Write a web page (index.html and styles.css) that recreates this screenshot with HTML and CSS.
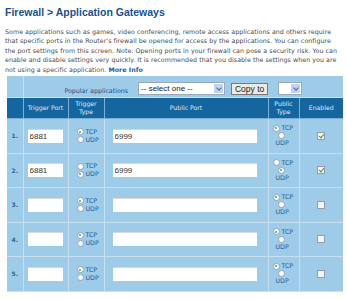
FILE: index.html
```html
<!DOCTYPE html>
<html lang="en">
<head>
  <meta charset="UTF-8">
  <title>Application Gateways</title>
  <link rel="stylesheet" href="styles.css">
</head>
<body>
  <h1>Firewall &gt; Application Gateways</h1>
  <p class="intro">
    Some applications such as games, video conferencing, remote access applications and others require<br>
    that specific ports in the Router's firewall be opened for access by the applications. You can configure<br>
    the port settings from this screen. Note: Opening ports in your firewall can pose a security risk. You can<br>
    enable and disable settings very quickly. It is recommended that you disable the settings when you are<br>
    not using a specific application. <a href="#">More Info</a>
  </p>

  <table class="gateways">
    <colgroup>
      <col class="c-num">
      <col class="c-tport">
      <col class="c-ttype">
      <col class="c-pport">
      <col class="c-ptype">
      <col class="c-en">
    </colgroup>
    <tr class="popular">
      <td></td>
      <td colspan="5">
        <div class="popular-bar">
          <span class="label">Popular applications</span>
          <span class="select wide">-- select one --<i class="arrow"></i></span>
          <span class="btn">Copy to</span>
          <span class="select small"><i class="arrow"></i></span>
        </div>
      </td>
    </tr>
    <tr class="head">
      <th></th>
      <th>Trigger Port</th>
      <th>Trigger<br>Type</th>
      <th>Public Port</th>
      <th>Public<br>Type</th>
      <th>Enabled</th>
    </tr>
    <tbody id="rows"></tbody>
  </table>

  <script>
    const rows = [
      { trig: "6881", ttype: "tcp", pub: "6999", ptype: "tcp", on: true },
      { trig: "6881", ttype: "udp", pub: "6999", ptype: "udp", on: true },
      { trig: "", ttype: "tcp", pub: "", ptype: "tcp", on: false },
      { trig: "", ttype: "tcp", pub: "", ptype: "tcp", on: false },
      { trig: "", ttype: "tcp", pub: "", ptype: "tcp", on: false }
    ];

    const body = document.getElementById('rows');
    rows.forEach((r, i) => {
      const n = i + 1;
      const tr = document.createElement('tr');
      tr.className = 'data';
      tr.innerHTML = `
        <td class="num">${n}.</td>
        <td><input class="port" type="text" value="${r.trig}"></td>
        <td class="type">
          <label><input type="radio" name="tt${n}" ${r.ttype === 'tcp' ? 'checked' : ''}> TCP</label>
          <label><input type="radio" name="tt${n}" ${r.ttype === 'udp' ? 'checked' : ''}> UDP</label>
        </td>
        <td><input class="port long" type="text" value="${r.pub}"></td>
        <td class="type ptype">
          <label><input type="radio" name="pt${n}" ${r.ptype === 'tcp' ? 'checked' : ''}> TCP</label>
          <label class="stack"><input type="radio" name="pt${n}" ${r.ptype === 'udp' ? 'checked' : ''}><span>UDP</span></label>
        </td>
        <td class="en"><input type="checkbox" ${r.on ? 'checked' : ''}></td>`;
      body.appendChild(tr);
    });
  </script>
</body>
</html>
```

FILE: styles.css
```css
body {
  margin: 0;
  padding: 5px 4px 0 5px;
  font-family: "DejaVu Sans", Verdana, sans-serif;
  background: #fff;
}

h1 {
  margin: 0;
  font-family: "Liberation Sans", Arial, sans-serif;
  font-size: 10.5px;
  font-weight: bold;
  color: #1c4f8c;
  line-height: 14px;
}

.intro {
  margin: 8px 0 0 0;
  font-size: 6.3px;
  line-height: 9.4px;
  color: #4a4a4a;
  letter-spacing: 0.05px;
  white-space: nowrap;
}

.intro a {
  color: #1d5da6;
  font-weight: bold;
  text-decoration: none;
}

.gateways {
  margin: 2px 0 0 2px;
  width: 336px;
  border-collapse: collapse;
  table-layout: fixed;
  background: #9ecbe7;
  font-size: 6.3px;
  color: #1f5c99;
}

.c-num { width: 16px; }
.c-tport { width: 45px; }
.c-ttype { width: 36px; }
.c-pport { width: 164px; }
.c-ptype { width: 31px; }
.c-en { width: 44px; }

.gateways td,
.gateways th {
  border: 1px solid #c6e0f1;
  padding: 0;
}

.gateways tr:first-child td {
  border-top: none;
}

.gateways td:first-child,
.gateways th:first-child {
  border-left: none;
}

.gateways td:last-child,
.gateways th:last-child {
  border-right: none;
}

.popular td {
  height: 21px;
  vertical-align: bottom;
}

.popular-bar {
  display: flex;
  justify-content: center;
  align-items: flex-end;
  gap: 6px;
  padding: 0 0 2px 0;
  color: #1f4f80;
}

.popular-bar .label {
  margin-right: 4px;
  line-height: 9px;
}

.select {
  position: relative;
  display: flex;
  align-items: center;
  height: 13px;
  background: #fff;
  border: 1px solid #9ab;
  font-family: "Liberation Sans", Arial, sans-serif;
  font-size: 8px;
  color: #222;
  padding-left: 2px;
  box-sizing: border-box;
}

.select.wide {
  width: 87px;
}

.select.small {
  width: 24px;
  margin-left: 4px;
}

.select .arrow {
  position: absolute;
  right: 1px;
  top: 1px;
  width: 9px;
  height: 9px;
  background: #c3d3ef;
}

.select .arrow::after {
  content: "";
  position: absolute;
  left: 2.5px;
  top: 1.5px;
  width: 3px;
  height: 3px;
  border-right: 1.2px solid #4c64a8;
  border-bottom: 1.2px solid #4c64a8;
  transform: rotate(45deg);
}

.btn {
  display: flex;
  align-items: center;
  justify-content: center;
  width: 37px;
  height: 12px;
  box-sizing: border-box;
  background: #eceae3;
  border: 1px solid #7a7a7a;
  font-family: "Liberation Sans", Arial, sans-serif;
  font-size: 8.5px;
  color: #222;
}

.head th {
  height: 20px;
  background: #15659e;
  color: #dfeefa;
  font-weight: normal;
  font-size: 6.2px;
  line-height: 8px;
  text-align: center;
  border-color: #7ab0d6;
}

.data td {
  height: 33.5px;
  vertical-align: middle;
}

.num {
  text-align: center;
  font-weight: bold;
  font-size: 6px;
  color: #2a5f94;
}

.port {
  display: block;
  width: 35px;
  height: 14px;
  margin: 0 0 0 4px;
  box-sizing: border-box;
  border: none;
  border-top: 1px solid #d8d8d8;
  padding: 0 2px;
  font-family: "Liberation Sans", Arial, sans-serif;
  font-size: 8px;
  color: #333;
  background: #fff;
  outline: none;
}

.port.long {
  width: 144px;
  margin-left: 8px;
}

.type {
  padding-left: 8px !important;
  line-height: 8px;
  color: #1f5c99;
}

.type label {
  display: flex;
  align-items: center;
  gap: 2px;
  white-space: nowrap;
}

.ptype {
  padding-left: 4px !important;
}

.ptype .stack {
  flex-direction: column;
  align-items: flex-start;
  gap: 0;
}

.ptype .stack input {
  margin-left: 5px;
}

.ptype .stack span {
  margin-left: 3px;
}

input[type="radio"] {
  appearance: none;
  margin: 0;
  width: 7px;
  height: 7px;
  border-radius: 50%;
  background: #fff;
  border: 1px solid #8aa4bd;
  position: relative;
}

input[type="radio"]:checked::after {
  content: "";
  position: absolute;
  left: 1.5px;
  top: 1.5px;
  width: 2px;
  height: 2px;
  border-radius: 50%;
  background: #4fa24f;
}

.en {
  text-align: center;
}

input[type="checkbox"] {
  appearance: none;
  margin: 0;
  width: 8px;
  height: 8px;
  border: 1px solid #99a;
  background: #f4f4f4;
  position: relative;
  vertical-align: middle;
}

input[type="checkbox"]:checked::after {
  content: "";
  position: absolute;
  left: 2px;
  top: 0;
  width: 2px;
  height: 4px;
  border-right: 1.3px solid #3a9a3a;
  border-bottom: 1.3px solid #3a9a3a;
  transform: rotate(40deg);
}
```
